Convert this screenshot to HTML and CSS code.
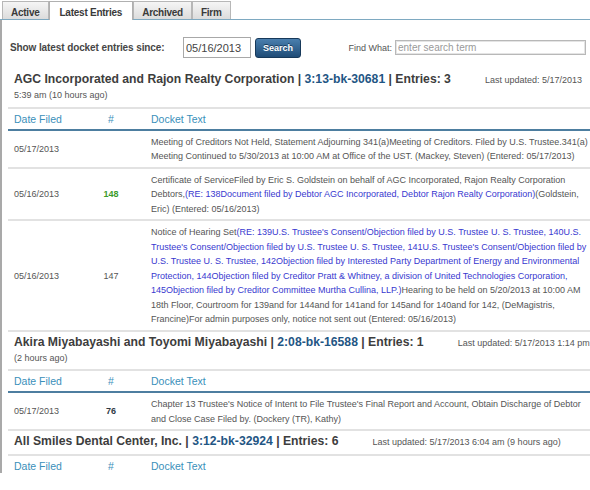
FILE: index.html
```html
<!DOCTYPE html>
<html>
<head>
<meta charset="utf-8">
<link rel="stylesheet" href="styles.css">
</head>
<body>
<div class="tabs">
  <div class="tab">Active</div>
  <div class="tab active">Latest Entries</div>
  <div class="tab">Archived</div>
  <div class="tab">Firm</div>
</div>
<div class="panel">
  <div class="search-row">
    <label class="since-label">Show latest docket entries since:</label>
    <input class="date-input" type="text" value="05/16/2013">
    <button class="search-btn">Search</button>
    <div class="spacer"></div>
    <label class="find-label">Find What:</label>
    <input class="find-input" type="text" placeholder="enter search term">
  </div>

  <div class="case">
    <div class="case-head"><span class="case-title">AGC Incorporated and Rajon Realty Corporation | <span class="case-no">3:13-bk-30681</span> | Entries: 3</span><span class="updated">Last updated: 5/17/2013 5:39 am (10 hours ago)</span></div>
    <table class="entries">
      <colgroup><col class="c-date"><col class="c-num"><col class="c-text"></colgroup>
      <thead><tr><th>Date Filed</th><th class="num">#</th><th>Docket Text</th></tr></thead>
      <tbody>
        <tr><td>05/17/2013</td><td class="num"></td><td class="text">Meeting of Creditors Not Held, Statement Adjourning 341(a)Meeting of Creditors. Filed by U.S. Trustee.341(a) Meeting Continued to 5/30/2013 at 10:00 AM at Office of the UST. (Mackey, Steven) (Entered: 05/17/2013)</td></tr>
        <tr><td>05/16/2013</td><td class="num green">148</td><td class="text">Certificate of ServiceFiled by Eric S. Goldstein on behalf of AGC Incorporated, Rajon Realty Corporation Debtors,<span class="link">(RE: 138Document filed by Debtor AGC Incorporated, Debtor Rajon Realty Corporation)</span>(Goldstein, Eric) (Entered: 05/16/2013)</td></tr>
        <tr><td>05/16/2013</td><td class="num">147</td><td class="text">Notice of Hearing Set<span class="link">(RE: 139U.S. Trustee's Consent/Objection filed by U.S. Trustee U. S. Trustee, 140U.S. Trustee's Consent/Objection filed by U.S. Trustee U. S. Trustee, 141U.S. Trustee's Consent/Objection filed by U.S. Trustee U. S. Trustee, 142Objection filed by Interested Party Department of Energy and Environmental Protection, 144Objection filed by Creditor Pratt &amp; Whitney, a division of United Technologies Corporation, 145Objection filed by Creditor Committee Murtha Cullina, LLP.)</span>Hearing to be held on 5/20/2013 at 10:00 AM 18th Floor, Courtroom for 139and for 144and for 141and for 145and for 140and for 142, (DeMagistris, Francine)For admin purposes only, notice not sent out (Entered: 05/16/2013)</td></tr>
      </tbody>
    </table>
  </div>

  <div class="case">
    <div class="case-head"><span class="case-title">Akira Miyabayashi and Toyomi Miyabayashi | <span class="case-no">2:08-bk-16588</span> | Entries: 1</span><span class="updated">Last updated: 5/17/2013 1:14 pm (2 hours ago)</span></div>
    <table class="entries">
      <colgroup><col class="c-date"><col class="c-num"><col class="c-text"></colgroup>
      <thead><tr><th>Date Filed</th><th class="num">#</th><th>Docket Text</th></tr></thead>
      <tbody>
        <tr><td>05/17/2013</td><td class="num dark">76</td><td class="text">Chapter 13 Trustee's Notice of Intent to File Trustee's Final Report and Account, Obtain Discharge of Debtor and Close Case Filed by. (Dockery (TR), Kathy)</td></tr>
      </tbody>
    </table>
  </div>

  <div class="case">
    <div class="case-head"><span class="case-title">All Smiles Dental Center, Inc. | <span class="case-no">3:12-bk-32924</span> | Entries: 6</span><span class="updated">Last updated: 5/17/2013 6:04 am (9 hours ago)</span></div>
    <table class="entries">
      <colgroup><col class="c-date"><col class="c-num"><col class="c-text"></colgroup>
      <thead><tr><th>Date Filed</th><th class="num">#</th><th>Docket Text</th></tr></thead>
    </table>
  </div>
</div>
</body>
</html>
```

FILE: styles.css
```css
html, body {
  margin: 0;
  padding: 0;
  background: #ffffff;
}

body {
  font-family: "Liberation Sans", Arial, sans-serif;
  color: #555555;
  width: 590px;
  overflow: hidden;
}

/* Tabs */
.tabs {
  display: flex;
  align-items: flex-start;
  height: 19px;
  padding-left: 2px;
  border-bottom: 1px solid #7ea9c1;
}

.tab {
  box-sizing: border-box;
  margin-top: 1px;
  height: 18px;
  padding: 4px 8px 0;
  line-height: 13px;
  font-size: 10px;
  font-weight: bold;
  letter-spacing: -0.25px;
  color: #3a3a3a;
  border: 1px solid #b7b7b7;
  border-bottom: none;
  background: linear-gradient(#f5f5f5, #dcdcdc);
}

.tab.active {
  height: 19px;
  margin-bottom: -1px;
  padding: 4px 10px 0;
  background: #ffffff;
  border-color: #b0b0b0;
}

/* Panel */
.panel {
  box-sizing: border-box;
  height: 453px;
  border-left: 2px solid #a9a9a9;
  padding-left: 6px;
}

.search-row {
  display: flex;
  align-items: center;
  height: 21px;
  padding: 17px 4px 0 2px;
  margin-bottom: 11px;
}

.since-label {
  flex: none;
  width: 173px;
  font-size: 10px;
  font-weight: bold;
  letter-spacing: -0.1px;
  color: #464646;
}

.date-input {
  box-sizing: border-box;
  width: 68px;
  height: 21px;
  margin: 0;
  padding: 0 2px;
  border: 1px solid #a8a8a8;
  font-family: "Liberation Sans", Arial, sans-serif;
  font-size: 11px;
  color: #444444;
}

.search-btn {
  box-sizing: border-box;
  width: 46px;
  height: 20px;
  margin: 0 0 0 4px;
  padding: 0;
  border: 1px solid #17395a;
  border-radius: 3px;
  background: linear-gradient(#4a7fae, #1f4c77);
  color: #ffffff;
  font-family: "Liberation Sans", Arial, sans-serif;
  font-size: 9px;
  font-weight: bold;
  text-shadow: 0 -1px 0 #163a5c;
}

.spacer {
  flex: 1;
}

.find-label {
  font-size: 9px;
  color: #555555;
  margin-right: 3px;
}

.find-input {
  box-sizing: border-box;
  width: 191px;
  height: 15px;
  margin: 0;
  padding: 0 2px;
  border: 1px solid #b8b8b8;
  box-shadow: inset 0 0 0 1px #e4e4e4;
  font-family: "Liberation Sans", Arial, sans-serif;
  font-size: 10px;
  color: #444444;
}

.find-input::placeholder {
  color: #9a9a9a;
}

/* Case sections */
.case-head {
  padding: 3px 0 4.5px 6px;
  border-bottom: 2px solid #e2e2e2;
  font-size: 12.2px;
  line-height: 15px;
  font-weight: bold;
  color: #3d3d3d;
}

.case-no {
  color: #1f5684;
}

.updated {
  margin-left: 34px;
  font-size: 9px;
  line-height: 1;
  font-weight: normal;
  color: #555555;
}

.entries {
  width: 100%;
  table-layout: fixed;
  border-collapse: separate;
  border-spacing: 0;
}

.c-date { width: 69px; }
.c-num { width: 68px; }

.entries th {
  height: 20px;
  padding: 0 6px;
  line-height: 20px;
  font-size: 10.5px;
  font-weight: normal;
  text-align: left;
  color: #3a8fba;
  border-bottom: 2px solid #4d7ea0;
  box-sizing: border-box;
}

.entries th.num,
.entries td.num {
  text-align: center;
}

.entries td {
  padding: 4px 6px 3px;
  line-height: 14.5px;
  font-size: 9px;
  vertical-align: middle;
  color: #555555;
  border-bottom: 2px solid #e2e2e2;
}

.entries td.text {
  padding-right: 0;
}

.entries td.green {
  color: #3c9b2c;
  font-weight: bold;
}

.entries td.dark {
  color: #2f3a45;
  font-weight: bold;
}

.link {
  color: #3838cf;
}
```
